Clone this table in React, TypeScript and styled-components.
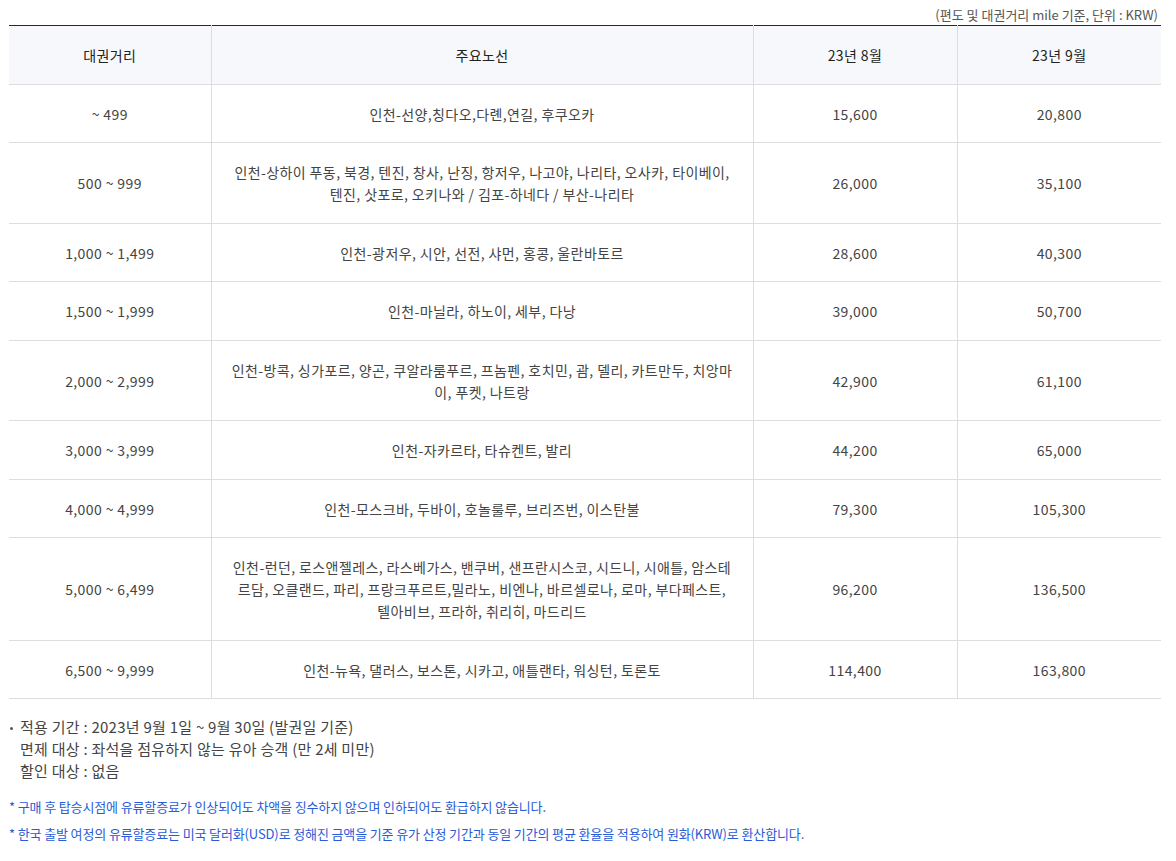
import * as React from "react";
import styled, { createGlobalStyle } from "styled-components";

const GlobalStyle = createGlobalStyle`
  body {
    margin: 0;
    background: #fff;
    font-family: "Noto Sans CJK KR", "Noto Sans", sans-serif;
  }
`;

const Page = styled.div`
  padding: 0 15px 0 9px;
`;

const Caption = styled.div`
  text-align: right;
  font-size: 13px;
  line-height: 18px;
  color: #555;
  padding: 6px 3px 1px 0;
`;

const Table = styled.table`
  width: 100%;
  border-collapse: collapse;
  table-layout: fixed;
  border-top: 1px solid #0d2b6b;
  letter-spacing: 0.4px;
`;

const HeadCell = styled.th`
  height: 58px;
  padding: 0 10px;
  background: #f7f8fb;
  font-weight: 400;
  font-size: 14px;
  color: #222;
  border-bottom: 1px solid #dddddd;
  border-left: 1px solid #dddddd;
  &:first-child {
    border-left: none;
  }
`;

const Cell = styled.td`
  padding: 18px 16px 17.45px;
  text-align: center;
  font-size: 14px;
  line-height: 22px;
  color: #444;
  border-bottom: 1px solid #dddddd;
  border-left: 1px solid #dddddd;
  &:first-child {
    border-left: none;
  }
`;

const Line = styled.span`
  display: block;
  height: 22px;
  white-space: nowrap;
`;

const InfoList = styled.ul`
  list-style: none;
  margin: 17px 0 0;
  padding: 0 0 0 11px;
  font-size: 15px;
  line-height: 22px;
  letter-spacing: 0.25px;
  color: #444;
  position: relative;
  &::before {
    content: "";
    position: absolute;
    left: 1px;
    top: 11px;
    width: 3px;
    height: 3px;
    border-radius: 50%;
    background: #555;
  }
  li {
    margin: 0;
    height: 22px;
  }
`;

const Note = styled.p<{ $first?: boolean }>`
  margin: ${(p) => (p.$first ? "16px" : "9px")} 0 0;
  font-size: 13px;
  line-height: 18px;
  letter-spacing: -0.13px;
  color: #2a5bd7;
`;

const rows: [string, string[], string, string][] = [
  ["~ 499", ["인천-선양,칭다오,다롄,연길, 후쿠오카"], "15,600", "20,800"],
  [
    "500 ~ 999",
    [
      "인천-상하이 푸동, 북경, 텐진, 창사, 난징, 항저우, 나고야, 나리타, 오사카, 타이베이,",
      "텐진, 삿포로, 오키나와 / 김포-하네다 / 부산-나리타",
    ],
    "26,000",
    "35,100",
  ],
  ["1,000 ~ 1,499", ["인천-광저우, 시안, 선전, 샤먼, 홍콩, 울란바토르"], "28,600", "40,300"],
  ["1,500 ~ 1,999", ["인천-마닐라, 하노이, 세부, 다낭"], "39,000", "50,700"],
  [
    "2,000 ~ 2,999",
    ["인천-방콕, 싱가포르, 양곤, 쿠알라룸푸르, 프놈펜, 호치민, 괌, 델리, 카트만두, 치앙마", "이, 푸켓, 나트랑"],
    "42,900",
    "61,100",
  ],
  ["3,000 ~ 3,999", ["인천-자카르타, 타슈켄트, 발리"], "44,200", "65,000"],
  ["4,000 ~ 4,999", ["인천-모스크바, 두바이, 호놀룰루, 브리즈번, 이스탄불"], "79,300", "105,300"],
  [
    "5,000 ~ 6,499",
    [
      "인천-런던, 로스앤젤레스, 라스베가스, 밴쿠버, 샌프란시스코, 시드니, 시애틀, 암스테",
      "르담, 오클랜드, 파리, 프랑크푸르트,밀라노, 비엔나, 바르셀로나, 로마, 부다페스트,",
      "텔아비브, 프라하, 취리히, 마드리드",
    ],
    "96,200",
    "136,500",
  ],
  ["6,500 ~ 9,999", ["인천-뉴욕, 댈러스, 보스톤, 시카고, 애틀랜타, 워싱턴, 토론토"], "114,400", "163,800"],
];

export default function App() {
  return (
    <Page>
      <GlobalStyle />
      <Caption>(편도 및 대권거리 mile 기준, 단위 : KRW)</Caption>
      <Table>
        <colgroup>
          <col style={{ width: 202 }} />
          <col style={{ width: 542 }} />
          <col style={{ width: 204 }} />
          <col style={{ width: 204 }} />
        </colgroup>
        <thead>
          <tr>
            <HeadCell>대권거리</HeadCell>
            <HeadCell>주요노선</HeadCell>
            <HeadCell>23년 8월</HeadCell>
            <HeadCell>23년 9월</HeadCell>
          </tr>
        </thead>
        <tbody>
          {rows.map((r) => (
            <tr key={r[0]}>
              <Cell>
                <Line>{r[0]}</Line>
              </Cell>
              <Cell>
                {r[1].map((line, i) => (
                  <Line key={i}>{line}</Line>
                ))}
              </Cell>
              <Cell>
                <Line>{r[2]}</Line>
              </Cell>
              <Cell>
                <Line>{r[3]}</Line>
              </Cell>
            </tr>
          ))}
        </tbody>
      </Table>
      <InfoList>
        <li>적용 기간 : 2023년 9월 1일 ~ 9월 30일 (발권일 기준)</li>
        <li>면제 대상 : 좌석을 점유하지 않는 유아 승객 (만 2세 미만)</li>
        <li>할인 대상 : 없음</li>
      </InfoList>
      <Note $first>* 구매 후 탑승시점에 유류할증료가 인상되어도 차액을 징수하지 않으며 인하되어도 환급하지 않습니다.</Note>
      <Note>* 한국 출발 여정의 유류할증료는 미국 달러화(USD)로 정해진 금액을 기준 유가 산정 기간과 동일 기간의 평균 환율을 적용하여 원화(KRW)로 환산합니다.</Note>
    </Page>
  );
}
